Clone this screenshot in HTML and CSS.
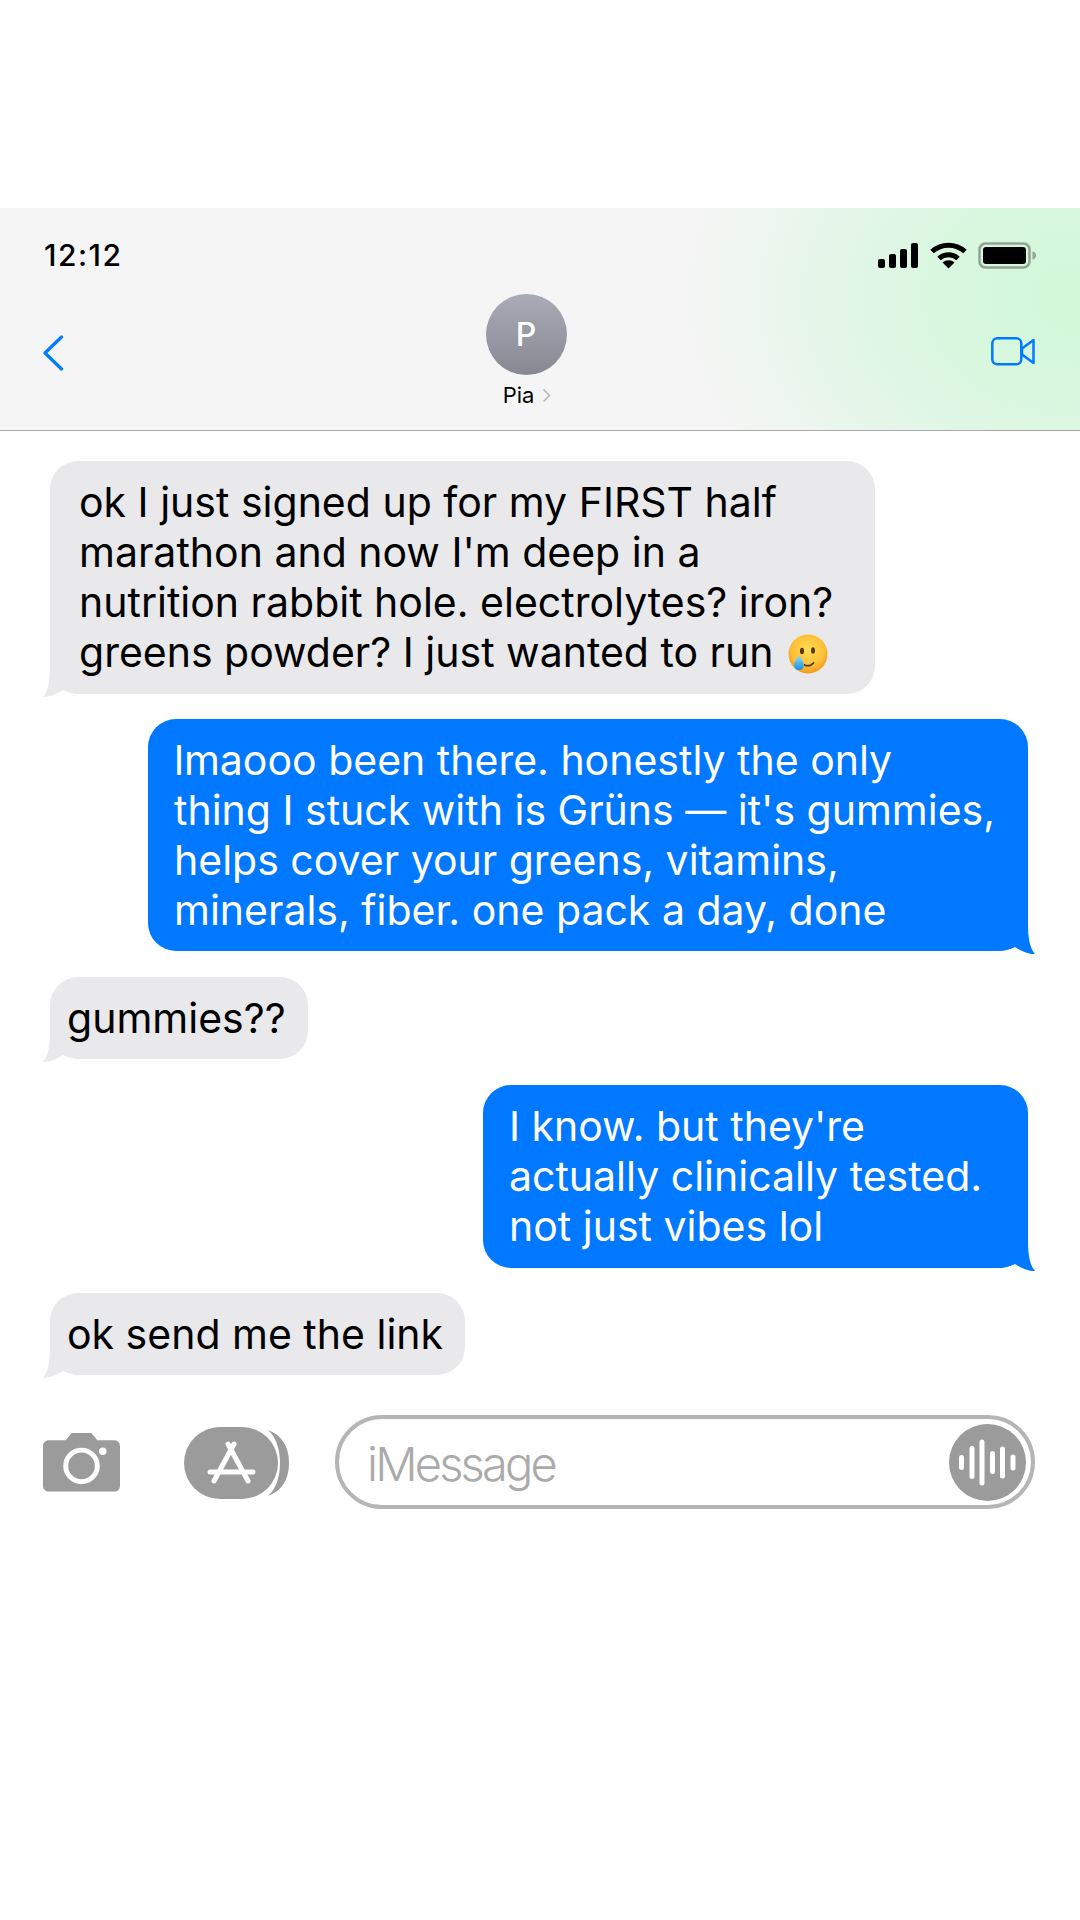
FILE: index.html
```html
<!doctype html>
<html lang="en">
<head>
    <meta charset="UTF-8">
    <title>Messages</title>
    <link rel="stylesheet" href="styles.css">
</head>
<body>
<div id="phone">
    <div class="header">
        <div class="status">
            <span class="time">12:12</span>
            <div class="status-icons">
                <svg class="signal" width="41" height="25" viewBox="0 0 41 25"><rect x="0" y="16" width="7" height="9" rx="2"/><rect x="11" y="11" width="7" height="14" rx="2"/><rect x="22" y="6" width="7" height="19" rx="2"/><rect x="33" y="0" width="7" height="25" rx="2"/></svg>
                <svg class="wifi" width="37" height="27" viewBox="0 0 37 27"><path d="M2 9.500C11.500 1 25.500 1 35 9.500" fill="none" stroke="#000" stroke-width="5"/><path d="M9 16.500C14.500 11.500 22.500 11.500 28 16.500" fill="none" stroke="#000" stroke-width="5"/><path d="M12.500 20.500C16 17.500 21 17.500 24.500 20.500L18.500 26.500Z"/></svg>
                <svg class="battery" width="59" height="27" viewBox="0 0 59 27"><rect x="1.500" y="1.500" width="50" height="24" rx="6" fill="none" stroke="#93a396" stroke-width="2.500"/><rect x="5" y="5" width="43" height="17" rx="3"/><path d="M54.500 9.500C57 10 58 11.500 58 13.500C58 15.500 57 17 54.500 17.500Z" fill="#93a396"/></svg>
            </div>
        </div>
        <div class="nav">
            <svg class="back" width="22" height="36" viewBox="0 0 22 36"><path d="M19.500 2L3 18L19.500 34" fill="none" stroke="#007aff" stroke-width="3.200" stroke-linecap="round" stroke-linejoin="round"/></svg>
            <div class="contact">
                <div class="avatar">P</div>
                <div class="name">Pia <svg width="9" height="15" viewBox="0 0 9 15"><path d="M1.500 1.500L7.500 7.500L1.500 13.500" fill="none" stroke="#b4b4b4" stroke-width="1.500"/></svg></div>
            </div>
            <svg class="video" width="44" height="29" viewBox="0 0 44 29"><rect x="1.300" y="1.300" width="29" height="26" rx="5" fill="none" stroke="#007aff" stroke-width="2.500"/><path d="M31 11.500L42.500 3V26L31 17.500Z" fill="none" stroke="#007aff" stroke-width="2.500" stroke-linejoin="round"/></svg>
        </div>
    </div>

    <div class="thread">
        <div class="bubble them first">
            ok I just signed up for my FIRST half<br>
            marathon and now I'm deep in a<br>
            nutrition rabbit hole. electrolytes? iron?<br>
            greens powder? I just wanted to run
            <svg class="emoji" width="40" height="40" viewBox="0 0 40 40">
                <defs>
                    <radialGradient id="face" cx="50%" cy="40%" r="60%"><stop offset="0" stop-color="#ffdc55"/><stop offset="0.7" stop-color="#fdbf36"/><stop offset="1" stop-color="#f2961a"/></radialGradient>
                    <linearGradient id="tear" x1="0" y1="0" x2="0" y2="1"><stop offset="0" stop-color="#8fdcf7"/><stop offset="1" stop-color="#1c8fe0"/></linearGradient>
                </defs>
                <circle cx="20" cy="20" r="19.500" fill="url(#face)"/>
                <ellipse cx="14" cy="17" rx="2" ry="3.200" fill="#5a3512"/>
                <ellipse cx="25" cy="16.500" rx="2" ry="3.200" fill="#5a3512"/>
                <path d="M16.500 31C20 32.500 23.500 31.500 25.500 29" fill="none" stroke="#5a3512" stroke-width="1.800" stroke-linecap="round"/>
                <path d="M11 21C13.500 25.500 16 27.500 16 31C16 34 14 36 11 36C8 36 6 34 6 31C6 27.500 8.500 25.500 11 21Z" fill="url(#tear)"/>
            </svg>
            <svg class="tail tail-l" width="42" height="38" viewBox="0 0 42 38"><path d="M10 0C10 14 10 28 3 36C10 36 17 33 23 29C28 31 34 33 41 33V0Z"/></svg>
        </div>
        <div class="bubble me second">
            lmaooo been there. honestly the only<br>
            thing I stuck with is Grüns — it's gummies,<br>
            helps cover your greens, vitamins,<br>
            minerals, fiber. one pack a day, done
            <svg class="tail tail-r" width="42" height="38" viewBox="0 0 42 38"><path d="M32 0C32 14 32 28 39 36C32 36 25 33 19 29C14 31 8 33 1 33V0Z"/></svg>
        </div>
        <div class="bubble them short third">
            gummies??
            <svg class="tail tail-l" width="42" height="38" viewBox="0 0 42 38"><path d="M10 0C10 14 10 28 3 36C10 36 17 33 23 29C28 31 34 33 41 33V0Z"/></svg>
        </div>
        <div class="bubble me fourth">
            I know. but they're<br>
            actually clinically tested.<br>
            not just vibes lol
            <svg class="tail tail-r" width="42" height="38" viewBox="0 0 42 38"><path d="M32 0C32 14 32 28 39 36C32 36 25 33 19 29C14 31 8 33 1 33V0Z"/></svg>
        </div>
        <div class="bubble them short last">
            ok send me the link
            <svg class="tail tail-l" width="42" height="38" viewBox="0 0 42 38"><path d="M10 0C10 14 10 28 3 36C10 36 17 33 23 29C28 31 34 33 41 33V0Z"/></svg>
        </div>
    </div>

    <div class="composer">
        <svg class="camera" width="77" height="60" viewBox="0 0 78 60">
            <path d="M6 8H23L29 0.500H49L55 8H72C75.500 8 78 10.500 78 14V54C78 57.500 75.500 60 72 60H6C2.500 60 0 57.500 0 54V14C0 10.500 2.500 8 6 8Z" fill="#9b9b9b"/>
            <circle cx="39" cy="34" r="16" fill="none" stroke="#fff" stroke-width="5"/>
            <circle cx="60.500" cy="19" r="3.800" fill="#fff"/>
        </svg>
        <svg class="apps" width="106" height="72" viewBox="0 0 106 72">
            <path d="M84 3C98 8 105 20 105 36C105 52 98 64 84 69C93 61 96 48 96 36C96 24 93 11 84 3Z" fill="#9b9b9b"/>
            <rect x="0" y="0" width="94" height="72" rx="36" fill="#9b9b9b"/>
            <path d="M44 17L64 54M50 17L30 54M26 45H69" fill="none" stroke="#fff" stroke-width="5" stroke-linecap="round"/>
        </svg>
        <div class="input">
            <span class="placeholder">iMessage</span>
            <svg class="voice" width="77" height="77" viewBox="0 0 77 77">
                <circle cx="38.500" cy="38.500" r="38.500" fill="#9b9b9b"/>
                <g stroke="#fff" stroke-width="5" stroke-linecap="round">
                    <path d="M12.500 33.500V43.500M23 24.500V52.500M33 18V59M43.500 29.500V47.500M53.500 25V52M64 33V44"/>
                </g>
            </svg>
        </div>
    </div>
</div>
</body>
</html>
```

FILE: styles.css
```css
* {
    margin: 0;
    padding: 0;
    box-sizing: border-box;
}

body {
    background-color: #fff;
    font-family: Inter, "Liberation Sans", sans-serif;
}

#phone {
    width: 1080px;
    height: 1920px;
    padding-top: 208px;
    overflow: hidden;
}

.header {
    height: 223px;
    border-bottom: 1px solid #a9a9a9;
    background:
        radial-gradient(ellipse 400px 300px at 100% 40%, #cff8d8 0%, rgba(207, 248, 216, 0.7) 40%, rgba(245, 245, 245, 0) 100%),
        #f5f5f5;
}

.status {
    display: flex;
    justify-content: space-between;
    align-items: center;
    height: 27px;
    padding: 0 43px 0 44px;
    position: relative;
    top: 34px;
}

.time {
    font-size: 30px;
    font-weight: 500;
    letter-spacing: 1.500px;
    line-height: 27px;
    color: #000;
}

.status-icons {
    display: flex;
    align-items: center;
    gap: 11px;
}

.nav {
    display: flex;
    justify-content: space-between;
    align-items: flex-start;
    padding: 59px 45px 0 42px;
}

.back {
    margin-top: 41px;
}

.contact {
    display: flex;
    flex-direction: column;
    align-items: center;
    width: 100px;
    margin-right: 3px;
}

.avatar {
    width: 81px;
    height: 81px;
    border-radius: 50%;
    background: linear-gradient(#a9abb7, #868892);
    color: #fff;
    font-size: 32px;
    font-weight: 500;
    text-align: center;
    line-height: 81px;
}

.name {
    display: flex;
    align-items: center;
    gap: 8px;
    margin-top: 7px;
    margin-left: 2px;
    font-size: 22px;
    line-height: 27px;
    color: #000;
}

.video {
    margin-top: 43px;
}

.thread {
    display: flex;
    flex-direction: column;
    padding: 30px 52px 0 50px;
}

.bubble {
    position: relative;
    isolation: isolate;
    font-size: 41px;
    font-weight: 370;
    line-height: 50px;
    border-radius: 28px;
    padding: 16px 0 17px 29px;
    white-space: nowrap;
}

.them {
    align-self: flex-start;
    background-color: #e9e9eb;
    color: #000;
    fill: #e9e9eb;
}

.me {
    align-self: flex-end;
    background-color: #0078ff;
    color: #fff;
    fill: #0078ff;
    padding-left: 26px;
}

.first {
    width: 825px;
}

.second {
    width: 880px;
    height: 232px;
}

.third {
    width: 258px;
}

.fourth {
    width: 545px;
}

.last {
    width: 415px;
}

.them + .me {
    margin-top: 25px;
}

.short + .me {
    margin-top: 26px;
}

.me + .them {
    margin-top: 26px;
}

.fourth + .last {
    margin-top: 25px;
}

.short {
    padding: 16px 0 16px 17px;
    border-radius: 28px;
}

.emoji {
    vertical-align: -7px;
    margin-left: 3px;
}

.tail {
    position: absolute;
    bottom: -5px;
    z-index: -1;
}

.tail-l {
    left: -10px;
}

.tail-r {
    right: -10px;
}

.composer {
    display: flex;
    align-items: center;
    margin-top: 40px;
    padding: 0 45px 0 43px;
}

.apps {
    margin-top: 2px;
    margin-left: 64px;
}

.input {
    display: flex;
    justify-content: space-between;
    align-items: center;
    flex: 1;
    height: 94px;
    margin-left: 45px;
    padding: 0 5px 0 28px;
    border: 4px solid #b5b5b5;
    border-radius: 47px;
}

.placeholder {
    padding-top: 3px;
    font-size: 47px;
    font-weight: 300;
    letter-spacing: -2.800px;
    color: #aaaaaa;
}
```
